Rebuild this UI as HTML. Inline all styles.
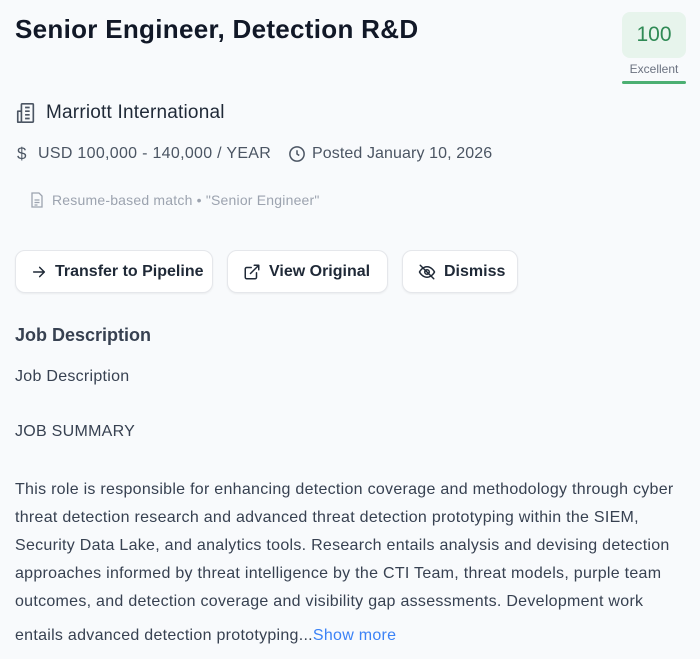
<!DOCTYPE html>
<html><head><meta charset="utf-8"><style>
*{margin:0;padding:0;box-sizing:border-box}
body{width:700px;height:659px;overflow:hidden;background:#f8fafc;font-family:"Liberation Sans",sans-serif;color:#1f2937;position:relative}
.a{position:absolute;white-space:nowrap}
h1{position:absolute;left:15px;top:14px;font-size:26px;font-weight:600;color:#111827;letter-spacing:0.3px}
.score{position:absolute;left:622px;top:12px;width:64px;height:46px;background:#e7f4ec;border-radius:8px;color:#2f8a55;font-size:21px;text-align:center;line-height:46px}
.exc{position:absolute;left:622px;top:62px;width:64px;text-align:center;font-size:12px;color:#6b7280}
.bar{position:absolute;left:622px;top:81px;width:64px;height:3px;border-radius:2px;background:#4caf72}
.btn{position:absolute;top:250px;height:43px;background:#fff;border:1px solid #e5e7eb;border-radius:10px;box-shadow:0 1px 2px rgba(0,0,0,.06);font-size:16px;font-weight:600;color:#1f2937;display:flex;align-items:center;padding-left:15px;gap:8px}
svg{display:block}
.p{position:absolute;left:15px;font-size:16px;color:#374151;letter-spacing:0.28px}
</style></head><body>
<h1>Senior Engineer, Detection R&amp;D</h1>
<div class="score">100</div><div class="exc">Excellent</div><div class="bar"></div>

<svg class="a" style="left:15px;top:102px" width="22" height="22" viewBox="0 0 24 24" fill="none" stroke="#4b5563" stroke-width="1.8" stroke-linejoin="round"><rect x="7" y="2" width="13" height="20" rx="1"/><path d="M7 10H3v12h4M11 6h5M11 10h5M11 14h5M11 18h5"/></svg>
<div class="a" style="left:46px;top:102px;font-size:19px;color:#1f2937;letter-spacing:0.2px">Marriott International</div>

<div class="a" style="left:17px;top:144px;font-size:17px;color:#4b5563">$</div>
<div class="a" style="left:38px;top:145px;font-size:16px;color:#4b5563;letter-spacing:0.3px">USD 100,000 - 140,000 / YEAR</div>
<svg class="a" style="left:288px;top:145px" width="18" height="18" viewBox="0 0 24 24" fill="none" stroke="#4b5563" stroke-width="2"><circle cx="12" cy="12" r="9.5"/><path d="M12 7v5l3 2"/></svg>
<div class="a" style="left:312px;top:145px;font-size:16px;color:#4b5563;letter-spacing:0.1px">Posted January 10, 2026</div>

<svg class="a" style="left:30px;top:192px" width="14" height="16" viewBox="0 0 14 16" fill="none" stroke="#9ca3af" stroke-width="1.3"><path d="M2 1h7l3 3v11H2z"/><path d="M4.5 8h5M4.5 10.5h5M4.5 13h3"/></svg>
<div class="a" style="left:52px;top:192px;font-size:14px;color:#9ca3af;letter-spacing:0.2px">Resume-based match • "Senior Engineer"</div>

<div class="btn" style="left:15px;width:198px"><svg width="16" height="16" viewBox="0 0 24 24" fill="none" stroke="#1f2937" stroke-width="2.2" stroke-linecap="round" stroke-linejoin="round"><path d="M4 12h16M13 5l7 7-7 7"/></svg>Transfer to Pipeline</div>
<div class="btn" style="left:227px;width:161px"><svg width="18" height="18" viewBox="0 0 24 24" fill="none" stroke="#1f2937" stroke-width="2" stroke-linecap="round" stroke-linejoin="round"><path d="M18 13v6a2 2 0 0 1-2 2H5a2 2 0 0 1-2-2V8a2 2 0 0 1 2-2h6M15 3h6v6M10 14L21 3"/></svg>View Original</div>
<div class="btn" style="left:402px;width:116px"><svg width="18" height="18" viewBox="0 0 24 24" fill="none" stroke="#1f2937" stroke-width="2" stroke-linecap="round" stroke-linejoin="round"><path d="M2 12s3.5-7 10-7 10 7 10 7-3.5 7-10 7S2 12 2 12z"/><circle cx="12" cy="12" r="3"/><path d="M3 3l18 18"/></svg>Dismiss</div>

<div class="a" style="left:15px;top:325px;font-size:18px;font-weight:600;color:#374151">Job Description</div>
<div class="p" style="top:368px">Job Description</div>
<div class="p" style="top:423px">JOB SUMMARY</div>
<div class="p" style="top:476px;line-height:28px;width:695px;white-space:nowrap">This role is responsible for enhancing detection coverage and methodology through cyber<br>threat detection research and advanced threat detection prototyping within the SIEM,<br>Security Data Lake, and analytics tools. Research entails analysis and devising detection<br>approaches informed by threat intelligence by the CTI Team, threat models, purple team<br>outcomes, and detection coverage and visibility gap assessments. Development work</div>
<div class="p" style="top:627px">entails advanced detection prototyping...<span style="color:#3b82f6">Show more</span></div>
</body></html>
